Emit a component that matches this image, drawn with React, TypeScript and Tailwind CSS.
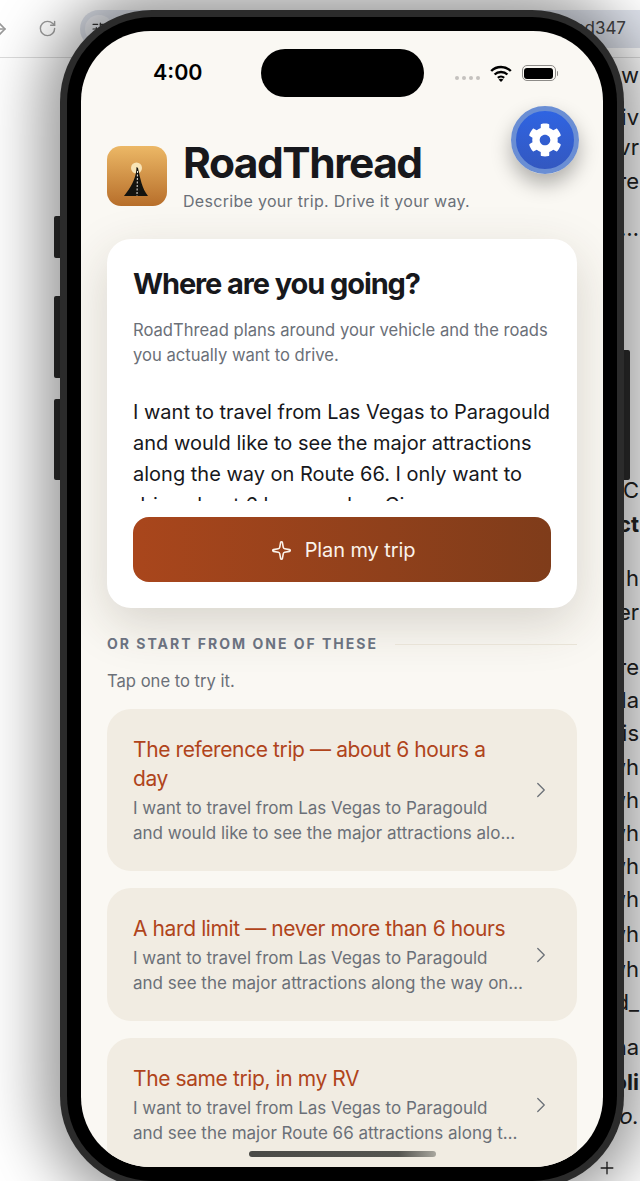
import { ChevronRight, Sparkle, RotateCw, ArrowRight, Plus, SlidersHorizontal } from 'lucide-react';
import { FaCog } from 'react-icons/fa';

const samples = [
  {
    title: 'The reference trip — about 6 hours a day',
    lines: ['I want to travel from Las Vegas to Paragould', 'and would like to see the major attractions alo…'],
  },
  {
    title: 'A hard limit — never more than 6 hours',
    lines: ['I want to travel from Las Vegas to Paragould', 'and see the major attractions along the way on…'],
  },
  {
    title: 'The same trip, in my RV',
    lines: ['I want to travel from Las Vegas to Paragould', 'and see the major Route 66 attractions along t…'],
  },
];

function Logo() {
  return (
    <svg viewBox="0 0 60 60" className="h-[60px] w-[60px] shrink-0 rounded-[14px]">
      <defs>
        <linearGradient id="logoBg" x1="0" y1="0" x2="0" y2="1">
          <stop offset="0" stopColor="#ecb866" />
          <stop offset="1" stopColor="#b76e2a" />
        </linearGradient>
      </defs>
      <rect width="60" height="60" fill="url(#logoBg)" />
      <circle cx="29.5" cy="22" r="5.5" fill="#f8e4b6" />
      <path d="M29.5 21 C29.5 28 27 34 25 38 C23 42 20 46 17 50 L41 50 C38 46 36 42 34.5 37 C33 32 32 27 31 22 Z" fill="#14130f" />
      <path d="M30.5 25 L30 50" stroke="#f3efe6" strokeWidth="1" strokeDasharray="2 1.5" fill="none" />
    </svg>
  );
}

function StatusBar() {
  return (
    <div className="flex h-[84px] shrink-0 items-center justify-between pl-[72px] pr-[45px]">
      <span className="text-[21.5px] font-semibold leading-none text-black">4:00</span>
      <div className="flex items-center gap-[10px]">
        <div className="mt-[10px] flex gap-[3px]">
          <span className="h-[4px] w-[4px] rounded-full bg-[#c4c2bf]" />
          <span className="h-[4px] w-[4px] rounded-full bg-[#c4c2bf]" />
          <span className="h-[4px] w-[4px] rounded-full bg-[#c4c2bf]" />
          <span className="h-[4px] w-[4px] rounded-full bg-[#c4c2bf]" />
        </div>
        <svg viewBox="0 0 22 17" className="h-[17px] w-[22px]" fill="none" stroke="#000" strokeWidth="2.4">
          <path d="M1.2 6 C6.5 0.6 15.5 0.6 20.8 6" />
          <path d="M4.6 9.5 C8 6.2 14 6.2 17.4 9.5" />
          <path d="M7.9 12.8 C9.6 11.2 12.4 11.2 14.1 12.8" />
          <path d="M11 17 L8.6 14.5 C10 13.4 12 13.4 13.4 14.5 Z" fill="#000" stroke="none" />
        </svg>
        <div className="flex items-center gap-[1px]">
          <div className="h-[16px] w-[34px] rounded-[5px] border border-[#8d8b88] p-[1.5px]">
            <div className="h-full w-full rounded-[3px] bg-black" />
          </div>
          <span className="h-[5px] w-[1.5px] rounded-r bg-[#8d8b88]" />
        </div>
      </div>
    </div>
  );
}

function SampleCard({ title, lines }: { title: string; lines: string[] }) {
  return (
    <div className="flex items-center gap-[10px] rounded-[24px] bg-[#f1ece2] py-[26px] pl-[26px] pr-[23px]">
      <div className="min-w-0 flex-1">
        <div className="text-[21px] leading-[29px] tracking-[-0.4px] text-[#b0441b]">{title}</div>
        <div className="mt-[3px] whitespace-nowrap text-[17px] leading-[24.5px] text-[#6b7078]">
          {lines.map((line) => (
            <div key={line}>{line}</div>
          ))}
        </div>
      </div>
      <ChevronRight className="h-[26px] w-[26px] shrink-0 text-[#6b7078]" strokeWidth={1.2} />
    </div>
  );
}

function BrowserBehind() {
  return (
    <>
      <div className="flex h-[58px] items-center border-b border-[#dcdcdc] bg-white">
        <ArrowRight className="ml-[-14px] h-[24px] w-[24px] text-[#9a9a9a]" strokeWidth={1.6} />
        <RotateCw className="ml-[28px] h-[19px] w-[19px] text-[#9a9a9a]" strokeWidth={1.8} />
        <div className="ml-[23px] flex h-[38px] flex-1 items-center justify-between rounded-l-full bg-[#dfe3ec] pl-[5px] pr-[14px]">
          <div className="flex h-[28px] w-[28px] items-center justify-center rounded-full bg-[#eef0f5]">
            <SlidersHorizontal className="h-[16px] w-[16px] text-[#333]" strokeWidth={1.8} />
          </div>
          <span className="text-[17px] text-[#444]">ed347</span>
        </div>
      </div>
      <div className="flex flex-col items-end whitespace-nowrap pr-px text-[22px] leading-[24px] text-[#222]">
        <span className="mt-[5px]">u w</span>
        <span className="mt-[18px]">giv</span>
        <span className="mt-[6px]">vr</span>
        <span className="mt-[10px]">ore</span>
        <span className="mt-[23px]">…</span>
        <span className="mt-[238px]">C</span>
        <span className="mt-[10px] font-bold">ct</span>
        <span className="mt-[30px]">n h</span>
        <span className="mt-[10px]">er</span>
        <span className="mt-[31px]">ore</span>
        <span className="mt-[9px]">la</span>
        <span className="mt-[9px]">is</span>
        <span className="mt-[10px]">wh</span>
        <span className="mt-[9px]">wh</span>
        <span className="mt-[9px]">wh</span>
        <span className="mt-[9px]">wh</span>
        <span className="mt-[9px]">wh</span>
        <span className="mt-[11px]">wh</span>
        <span className="mt-[11px]">wh</span>
        <span className="mt-[9px]">d_</span>
        <span className="mt-[21px]">na</span>
        <span className="mt-[11px] font-bold">oli</span>
        <span className="mt-[10px] italic">go.</span>
      </div>
      <Plus className="absolute left-[597px] top-[1158px] h-[20px] w-[20px] text-[#222]" strokeWidth={1.6} />
    </>
  );
}

export default function App() {
  return (
    <div className="relative h-[1181px] w-[640px] overflow-hidden bg-white font-['Inter',sans-serif]">
      <BrowserBehind />

      {/* Side buttons */}
      <div className="absolute left-[54px] top-[216px] h-[42px] w-[7px] rounded-l-[2px] bg-[#2c2c2c]" />
      <div className="absolute left-[54px] top-[296px] h-[82px] w-[7px] rounded-l-[2px] bg-[#2c2c2c]" />
      <div className="absolute left-[54px] top-[399px] h-[81px] w-[7px] rounded-l-[2px] bg-[#2c2c2c]" />
      <div className="absolute left-[623px] top-[350px] h-[130px] w-[7px] rounded-r-[2px] bg-[#2c2c2c]" />

      {/* Phone */}
      <div className="absolute left-[60px] top-[10px] h-[1178px] w-[564px] rounded-[92px] bg-[#2b2b2b] p-[7px] shadow-[0_0_60px_18px_rgba(0,0,0,0.42)]">
        <div className="h-full w-full rounded-[85px] bg-black p-[14px]">
          <div className="relative flex h-full w-full flex-col overflow-hidden rounded-[70px] bg-[#faf8f3]">
            <div className="absolute left-[180px] top-[18px] h-[48px] w-[163px] rounded-full bg-black" />
            <StatusBar />

            <div className="absolute right-[24px] top-[75px] flex h-[68px] w-[68px] items-center justify-center rounded-full border-[5px] border-[#6a8ed4] bg-gradient-to-b from-[#2f64e2] to-[#3358c0] text-white shadow-[0_10px_20px_rgba(0,0,0,0.3)]">
              <FaCog className="h-[34px] w-[34px]" />
            </div>

            <div className="flex flex-col px-[26px]">
              <div className="mt-[25px] flex items-center gap-[16px]">
                <Logo />
                <div className="min-w-0">
                  <h1 className="text-[42.5px] font-bold leading-[46px] tracking-[-1.5px] text-[#17181c]">RoadThread</h1>
                  <p className="mt-[5px] text-[16px] leading-[20px] tracking-[0.3px] text-[#6b7078]">Describe your trip. Drive it your way.</p>
                </div>
              </div>

              <div className="mt-[28px] rounded-[24px] bg-white p-[26px] shadow-[0_16px_50px_rgba(60,50,30,0.18)]">
                <h2 className="text-[29px] font-bold leading-[38px] tracking-[-1.1px] text-[#17181c]">Where are you going?</h2>
                <p className="mt-[15px] text-[16.6px] leading-[25px] text-[#6b7078]">
                  RoadThread plans around your vehicle and the roads you actually want to drive.
                </p>
                <div className="mt-[29px] h-[104px] overflow-hidden text-[20px] leading-[31px] text-[#17181c]">
                  I want to travel from Las Vegas to Paragould and would like to see the major attractions along the way on Route 66. I only want to drive about 6 hours a day. Give me
                </div>
                <button className="mt-[16px] flex h-[65px] w-full items-center justify-center gap-[13px] rounded-[16px] bg-gradient-to-r from-[#a9461c] to-[#7f3c1a] pl-[2px] pt-px text-[20px] tracking-[-0.1px] text-[#fbf3ea]">
                  <Sparkle className="h-[21px] w-[21px]" strokeWidth={1.8} />
                  Plan my trip
                </button>
              </div>

              <div className="mt-[27px] flex items-center gap-[17px]">
                <span className="text-[14px] font-bold leading-[18px] tracking-[2px] text-[#6b7280]">OR START FROM ONE OF THESE</span>
                <div className="h-px flex-1 bg-[#e8e3d7]" />
              </div>
              <p className="mt-[18px] text-[16.6px] leading-[20px] text-[#6b7078]">Tap one to try it.</p>

              <div className="mt-[18px] flex flex-col gap-[17px]">
                {samples.map((s) => (
                  <SampleCard key={s.title} title={s.title} lines={s.lines} />
                ))}
              </div>
            </div>

            <div className="absolute bottom-[10px] left-[168px] h-[6px] w-[187px] rounded-full bg-gradient-to-r from-[#4a4a46] via-[#555550] via-80% to-[#a8a69e]" />
          </div>
        </div>
      </div>
    </div>
  );
}
